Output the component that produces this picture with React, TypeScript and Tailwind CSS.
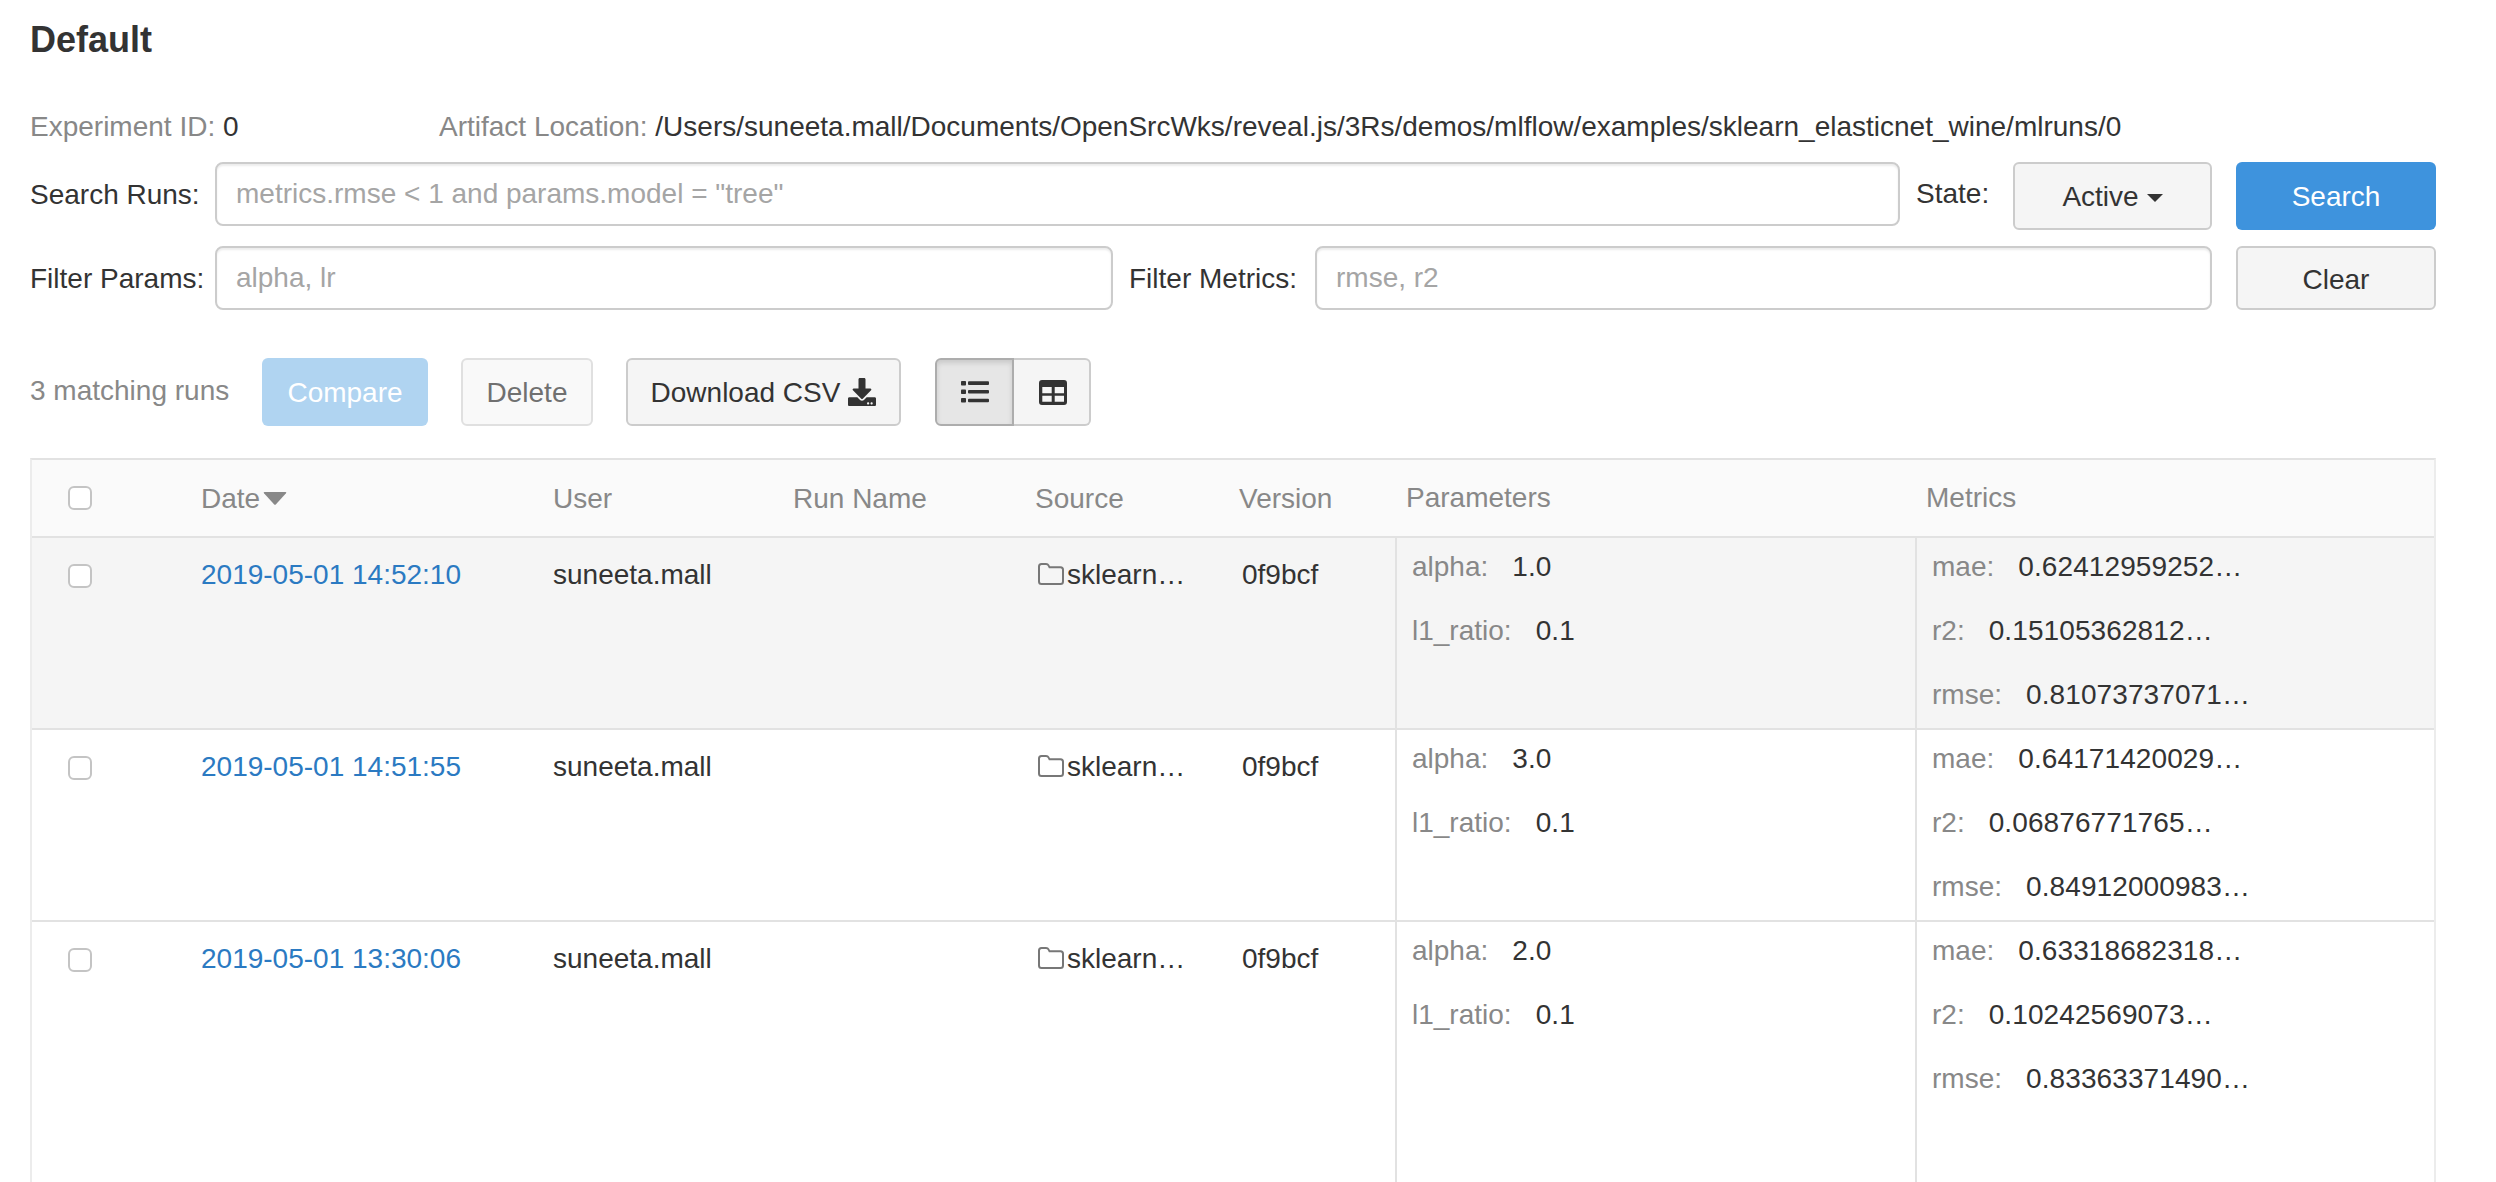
import React from "react";
import { FaDownload } from "react-icons/fa";

const gridCols = "grid grid-cols-[153px_352px_240px_242px_204px_172px_520px_1fr]";

function Check() {
  return <span className="block w-[24px] h-[24px] rounded-[6px] border-2 border-[#c4c4c4] bg-white" />;
}

function KV({ k, v }: { k: string; v: string }) {
  return (
    <div className="h-[64px] flex items-center -mt-[3px] mb-[3px]">
      <span className="text-[#888]">{k}:</span>
      <span className="ml-[24px] text-[#333] tracking-[0.1px]">{v}</span>
    </div>
  );
}

function Row({ date, alpha, mae, r2, rmse, hover, last }: { date: string; alpha: string; mae: string; r2: string; rmse: string; hover?: boolean; last?: boolean }) {
  return (
    <div className={`${gridCols} ${last ? "h-[330px]" : "h-[192px] border-b-2 border-[#e2e2e2]"} ${hover ? "bg-[#f5f5f5]" : "bg-white"}`}>
      <div className="pl-[36px] pt-[26px]"><Check /></div>
      <div className="pl-[16px] pt-[17px] text-[#2b7ac2]">{date}</div>
      <div className="pl-[16px] pt-[17px] text-[#333]">suneeta.mall</div>
      <div />
      <div className="pl-[19px] pt-[17px] text-[#333] flex items-start">
        <svg viewBox="0 0 26 22" className="w-[26px] h-[22px] mt-[8px] shrink-0" fill="none" stroke="#777" strokeWidth="2">
          <path d="M1 18.5V3.5Q1 1 3.5 1H8Q9.8 1 10.5 2.4L11.5 4.2H22.5Q25 4.2 25 6.7V18.5Q25 21 22.5 21H3.5Q1 21 1 18.5Z" />
        </svg>
        <span className="ml-[3px]">sklearn…</span>
      </div>
      <div className="pl-[19px] pt-[17px] text-[#333]">0f9bcf</div>
      <div className="border-l-2 border-[#e2e2e2] pl-[15px]">
        <KV k="alpha" v={alpha} />
        <KV k="l1_ratio" v="0.1" />
      </div>
      <div className="border-l-2 border-[#e2e2e2] pl-[15px]">
        <KV k="mae" v={mae} />
        <KV k="r2" v={r2} />
        <KV k="rmse" v={rmse} />
      </div>
    </div>
  );
}

const btn = "h-[68px] rounded-[6px] flex items-center justify-center pt-[2px]";

export default function App() {
  return (
    <div className="h-[1182px] overflow-hidden bg-white pl-[30px] pr-[60px] text-[28px] leading-[40px] text-[#333]" style={{ fontFamily: '"Liberation Sans", Arial, sans-serif' }}>
      <h1 className="text-[36px] leading-[40px] font-bold pt-[20px] h-[107px]">Default</h1>

      <div className="flex h-[40px] items-center">
        <div className="w-[409px]"><span className="text-[#888]">Experiment ID:</span> 0</div>
        <div><span className="text-[#888]">Artifact Location:</span> /Users/suneeta.mall/Documents/OpenSrcWks/reveal.js/3Rs/demos/mlflow/examples/sklearn_elasticnet_wine/mlruns/0</div>
      </div>

      <div className="flex items-start mt-[15px] h-[68px]">
        <div className="w-[185px] h-[64px] flex items-center pt-[2px]">Search Runs:</div>
        <div className="w-[1685px] h-[64px] rounded-[8px] border-2 border-[#ccc] bg-white flex items-center pl-[19px] text-[#a5a5a5] shadow-[inset_0_2px_2px_rgba(0,0,0,0.075)]">metrics.rmse &lt; 1 and params.model = "tree"</div>
        <div className="ml-[16px] w-[97px] h-[64px] flex items-center">State:</div>
        <div className={`${btn} w-[199px] bg-[#f5f5f5] border-2 border-[#ccc]`}>
          Active
          <span className="ml-[8px] mt-[2px] w-0 h-0 border-x-[8px] border-x-transparent border-t-[8px] border-t-[#333]" />
        </div>
        <div className={`${btn} ml-[24px] w-[200px] bg-[#3e93dd] text-white`}>Search</div>
      </div>

      <div className="flex items-start mt-[16px] h-[64px]">
        <div className="w-[185px] h-[64px] flex items-center pt-[2px]">Filter Params:</div>
        <div className="w-[898px] h-[64px] rounded-[8px] border-2 border-[#ccc] bg-white flex items-center pl-[19px] text-[#a5a5a5] shadow-[inset_0_2px_2px_rgba(0,0,0,0.075)]">alpha, lr</div>
        <div className="ml-[16px] w-[186px] h-[64px] flex items-center pt-[2px]">Filter Metrics:</div>
        <div className="w-[897px] h-[64px] rounded-[8px] border-2 border-[#ccc] bg-white flex items-center pl-[19px] text-[#a5a5a5] shadow-[inset_0_2px_2px_rgba(0,0,0,0.075)]">rmse, r2</div>
        <div className={`${btn} !h-[64px] ml-[24px] w-[200px] bg-[#f5f5f5] border-2 border-[#ccc] !pt-[4px]`}>Clear</div>
      </div>

      <div className="flex items-center mt-[48px] h-[68px]">
        <div className="w-[232px] text-[#888] -mt-[2px]">3 matching runs</div>
        <div className={`${btn} w-[166px] bg-[#b0d4f1] text-white`}>Compare</div>
        <div className={`${btn} ml-[33px] w-[132px] bg-[#f9f9f9] border-2 border-[#e0e0e0] text-[#707070]`}>Delete</div>
        <div className={`${btn} ml-[33px] w-[275px] bg-[#f5f5f5] border-2 border-[#ccc]`}>
          Download CSV
          <FaDownload className="ml-[8px] -mt-[2px] w-[28px] h-[28px] text-[#333]" />
        </div>
        <div className="ml-[34px] flex h-[68px] w-[156px]">
          <div className="w-[79px] rounded-l-[6px] border-2 border-[#adadad] bg-[#e6e6e6] shadow-[inset_0_3px_5px_rgba(0,0,0,0.125)] flex items-center justify-center">
            <svg viewBox="0 0 28 22" className="w-[28px] h-[22px]" fill="#333">
              <rect x="0" y="0" width="5" height="4.5" rx="0.8" />
              <rect x="0" y="8.5" width="5" height="4.5" rx="0.8" />
              <rect x="0" y="17" width="5" height="4.5" rx="0.8" />
              <rect x="7" y="0.3" width="21" height="3.6" rx="1" />
              <rect x="7" y="9" width="21" height="3.6" rx="1" />
              <rect x="7" y="17.7" width="21" height="3.6" rx="1" />
            </svg>
          </div>
          <div className="w-[77px] rounded-r-[6px] border-2 border-l-0 border-[#ccc] bg-[#f5f5f5] flex items-center justify-center">
            <svg viewBox="0 0 28 25" className="w-[28px] h-[25px] ml-[2px]">
              <path fill="#333" fillRule="evenodd" d="M3 0H25Q28 0 28 3V22Q28 25 25 25H3Q0 25 0 22V3Q0 0 3 0ZM3.3 7V13.3H12.7V7ZM15.7 7V13.3H25V7ZM3.3 15.7V21.7H12.7V15.7ZM15.7 15.7V21.7H25V15.7Z" />
            </svg>
          </div>
        </div>
      </div>

      <div className="mt-[32px] border-x-2 border-[#ececec] border-t-2 border-t-[#e2e2e2]">
        <div className={`${gridCols} h-[78px] bg-[#fafafa] border-b-2 border-[#e2e2e2] text-[#888]`}>
          <div className="pl-[36px] pt-[26px]"><Check /></div>
          <div className="pl-[16px] pt-[19px] flex items-start">
            Date
            <svg viewBox="0 0 24 13" className="w-[24px] h-[13px] mt-[13px] ml-[3px]" fill="#888">
              <path d="M1.5 0H22.5Q24 0 23 1.3L13 12.3Q12 13.3 11 12.3L1 1.3Q0 0 1.5 0Z" />
            </svg>
          </div>
          <div className="pl-[16px] pt-[19px]">User</div>
          <div className="pl-[16px] pt-[19px]">Run Name</div>
          <div className="pl-[16px] pt-[19px]">Source</div>
          <div className="pl-[16px] pt-[19px]">Version</div>
          <div className="pl-[11px] pt-[18px]">Parameters</div>
          <div className="pl-[11px] pt-[18px]">Metrics</div>
        </div>
        <Row hover date="2019-05-01 14:52:10" alpha="1.0" mae="0.62412959252…" r2="0.15105362812…" rmse="0.81073737071…" />
        <Row date="2019-05-01 14:51:55" alpha="3.0" mae="0.64171420029…" r2="0.06876771765…" rmse="0.84912000983…" />
        <Row last date="2019-05-01 13:30:06" alpha="2.0" mae="0.63318682318…" r2="0.10242569073…" rmse="0.83363371490…" />
      </div>
    </div>
  );
}
